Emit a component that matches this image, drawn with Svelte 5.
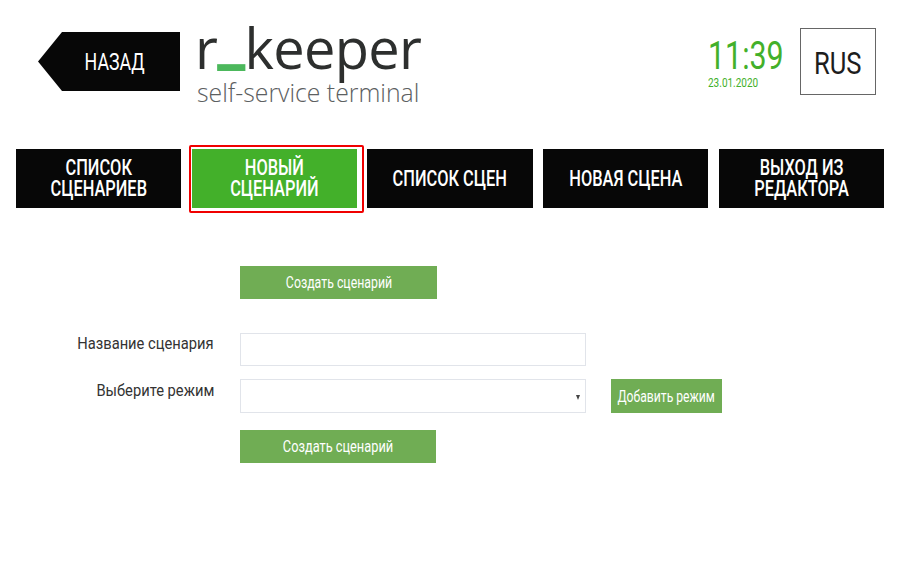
<script lang="ts">
  const tabs = [
    { label: 'СПИСОК\nСЦЕНАРИЕВ' },
    { label: 'НОВЫЙ\nСЦЕНАРИЙ', active: true },
    { label: 'СПИСОК СЦЕН' },
    { label: 'НОВАЯ СЦЕНА' },
    { label: 'ВЫХОД ИЗ\nРЕДАКТОРА' }
  ];
</script>

<div class="page">
  <header class="top">
    <button class="back"><span class="narrow">НАЗАД</span></button>
    <div class="logo">
      <div class="logo-name">r<span class="logo-dash">_</span>keeper</div>
      <div class="logo-sub">self-service terminal</div>
    </div>
    <div class="clock">
      <div class="time"><span class="narrow">11:39</span></div>
      <div class="date"><span class="narrow">23.01.2020</span></div>
    </div>
    <button class="lang"><span class="narrow">RUS</span></button>
  </header>

  <nav class="tabs">
    {#each tabs as tab}
      <button class="tab" class:active={tab.active} class:double={tab.label.includes('\n')}>
        <span class="narrow">{tab.label}</span>
      </button>
    {/each}
  </nav>

  <form class="form">
    <button type="button" class="green top-create"><span class="narrow">Создать сценарий</span></button>

    <div class="row first">
      <label for="name"><span class="narrow">Название сценария</span></label>
      <input id="name" type="text" />
    </div>

    <div class="row second">
      <label for="mode"><span class="narrow">Выберите режим</span></label>
      <div class="select" id="mode"><span class="caret"></span></div>
      <button type="button" class="green add"><span class="narrow">Добавить режим</span></button>
    </div>

    <button type="button" class="green bottom-create"><span class="narrow">Создать сценарий</span></button>
  </form>
</div>

<style>
  :global(body) {
    margin: 0;
    background: #fff;
  }

  .page {
    width: 900px;
    height: 573px;
    overflow: hidden;
    font-family: 'Roboto', sans-serif;
  }

  /* no condensed face is installed, so squeeze Roboto */
  .narrow {
    display: inline-block;
    transform: scaleX(0.8);
    white-space: pre-line;
  }

  button {
    border: 0;
    padding: 0;
    font-family: inherit;
    cursor: pointer;
  }

  .top {
    display: flex;
    align-items: flex-start;
    height: 149px;
    padding-left: 38px;
    box-sizing: border-box;
  }

  .back {
    width: 142px;
    height: 59px;
    margin-top: 32px;
    padding-left: 12px;
    background: #070707;
    color: #fff;
    font-size: 24px;
    clip-path: polygon(0 50%, 24px 0, 100% 0, 100% 100%, 24px 100%);
  }

  .back .narrow {
    transform: scaleX(0.74);
  }

  .logo {
    width: 226px;
    margin-left: 15px;
    margin-top: 14px;
    font-family: 'Open Sans', sans-serif;
  }

  .logo-name {
    font-size: 56px;
    line-height: 66px;
    letter-spacing: -0.7px;
    color: #2d2f2e;
    white-space: nowrap;
  }

  .logo-dash {
    display: inline-block;
    color: #4cb85c;
    font-weight: 800;
    transform: translateY(-9px);
  }

  .logo-sub {
    margin-top: -2px;
    margin-left: 2px;
    font-size: 24.8px;
    font-weight: 300;
    line-height: 28px;
    color: #5c6061;
    white-space: nowrap;
  }

  .clock {
    width: 92px;
    margin-left: 287px;
    margin-top: 36px;
    color: #43b02a;
  }

  .clock .narrow {
    transform-origin: left center;
  }

  .time {
    font-size: 38px;
    line-height: 40px;
  }

  .date {
    font-size: 12.5px;
    line-height: 14px;
  }

  .lang {
    width: 76px;
    height: 67px;
    margin-top: 28px;
    padding-top: 2px;
    box-sizing: border-box;
    border: 1px solid #666;
    background: #fff;
    color: #1d1d1d;
    font-size: 32px;
  }

  .tabs {
    display: grid;
    grid-template-columns: repeat(5, 165.2px);
    column-gap: 10.6px;
    padding-left: 15.8px;
  }

  .tab {
    position: relative;
    height: 59px;
    background: #070707;
    color: #fff;
    font-size: 22px;
    font-weight: 500;
    line-height: 21px;
  }

  .tab.double {
    padding-bottom: 2px;
  }

  .tab .narrow {
    transform: scaleX(0.745);
  }

  .tab.active {
    background: #43b02a;
  }

  .tab.active::after {
    content: '';
    position: absolute;
    left: -2.6px;
    top: -4px;
    width: 171px;
    height: 64px;
    border: 2px solid #f00000;
    border-radius: 2px;
  }

  .form {
    display: flex;
    flex-direction: column;
    align-items: flex-start;
    padding-top: 58px;
  }

  .green {
    background: #70ad54;
    color: #fff;
    font-size: 16px;
    white-space: nowrap;
  }

  .top-create {
    width: 197px;
    height: 33px;
    margin-left: 240px;
  }

  .top-create .narrow {
    transform: scaleX(0.77);
  }

  .row {
    display: flex;
  }

  .row.first {
    margin-top: 34px;
  }

  .row.second {
    margin-top: 13px;
  }

  label {
    width: 214px;
    margin-right: 26px;
    text-align: right;
    font-size: 17px;
    line-height: 20px;
    color: #333;
  }

  label .narrow {
    transform: scaleX(0.865);
    transform-origin: right center;
  }

  .second label {
    margin-top: 1px;
  }

  input,
  .select {
    width: 346px;
    box-sizing: border-box;
    border: 1px solid #e1e4ea;
    background: #fff;
  }

  input {
    height: 33px;
    padding: 0;
    outline: none;
  }

  .select {
    position: relative;
    height: 34px;
  }

  .caret {
    position: absolute;
    right: 5px;
    top: 15px;
    border-left: 2.5px solid transparent;
    border-right: 2.5px solid transparent;
    border-top: 5px solid #444;
  }

  .add {
    width: 111px;
    height: 34px;
    margin-left: 25px;
  }

  .add .narrow {
    margin: 0 -20px;
    transform: scaleX(0.76);
  }

  .bottom-create {
    width: 196px;
    height: 33px;
    margin-left: 240px;
    margin-top: 17px;
  }
</style>
